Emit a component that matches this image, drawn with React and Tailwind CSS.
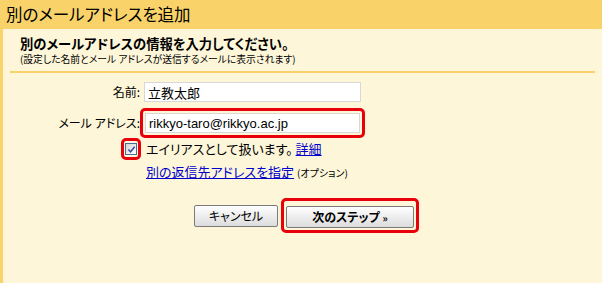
import React from "react";

const jp = "font-['Noto_Sans_CJK_JP','Noto_Sans',sans-serif] [font-feature-settings:'palt']";

export default function App() {
  return (
    <div className={`w-[602px] h-[283px] overflow-hidden bg-[#fdf6d9] border-l-[3px] border-[#f9d36a] text-black ${jp}`}>
      {/* header band */}
      <div className="h-[29px] bg-[#f9d36a] pl-[3px] flex items-center">
        <h1 className="text-[16.5px] leading-none font-normal">別のメールアドレスを追加</h1>
      </div>

      {/* intro */}
      <div className="pl-[17px] pt-[8px]">
        <p className="text-[13.3px] font-bold leading-[14px]">別のメールアドレスの情報を入力してください。</p>
        <p className="mt-[2px] text-[9.8px] leading-[12px]">(設定した名前とメール アドレスが送信するメールに表示されます)</p>
      </div>
      <div className="ml-[7px] mt-[6px] w-[585px] h-[2px] bg-[#f9d36a]" />

      {/* form */}
      <div className="mt-[5px] grid grid-cols-[137px_auto] gap-y-[2px] items-center">
        <label className="text-[12px] leading-[16px] text-right">名前:</label>
        <div className="p-[4px] w-[225px]">
          <input
            defaultValue="立教太郎"
            className="block w-full h-[20px] bg-white border border-[#d8d8d8] px-[3px] text-[13px] outline-none"
          />
        </div>

        <label className="text-[12px] leading-[16px] text-right whitespace-nowrap">メール アドレス:</label>
        <div className="w-[225px] border-[3px] border-[#e8000b] rounded-[5px] p-[2px]">
          <input
            defaultValue="rikkyo-taro@rikkyo.ac.jp"
            className="block w-full h-[20px] bg-white border border-[#d8d8d8] px-[3px] text-[13px] font-['Liberation_Sans',sans-serif] outline-none"
          />
        </div>
      </div>

      <div className="grid grid-cols-[137px_auto] items-center">
        <div className="flex justify-end">
          <div className="w-[20px] h-[22px] border-[3px] border-[#e8000b] rounded-[5px] flex items-center justify-center mr-[-1px]">
            <div className="w-[12px] h-[12px] border border-[#4a6a9a] bg-gradient-to-br from-[#d4d4d4] to-white flex items-center justify-center">
              <svg viewBox="0 0 10 10" className="w-[9px] h-[9px]">
                <path d="M1.5 5 L4 7.5 L8.5 2" fill="none" stroke="#3c4fa8" strokeWidth="1.8" />
              </svg>
            </div>
          </div>
        </div>
        <div className="pl-[6px] text-[13px] leading-[16px] whitespace-nowrap">
          エイリアスとして扱います。
          <a href="#" className="ml-[3px] text-[#0000cc] underline">詳細</a>
        </div>

        <div />
        <div className="pl-[6px] pt-[2px] h-[18px] leading-[16px] whitespace-nowrap">
          <a href="#" className="text-[13px] text-[#0000cc] underline">別の返信先アドレスを指定</a>
          <span className="text-[10px] ml-[3px]">(オプション)</span>
        </div>
      </div>

      {/* buttons */}
      <div className="mt-[20px] pl-[191px] flex items-center gap-[3px]">
        <button className="w-[84px] h-[22px] border border-[#7a7a7a] rounded-[2px] bg-gradient-to-b from-white to-[#dcdcdc] text-[12px] leading-none">
          キャンセル
        </button>
        <div className="border-[3px] border-[#e8000b] rounded-[5px] p-[2px]">
          <button className="w-[128px] h-[22px] border border-[#7a7a7a] rounded-[2px] bg-gradient-to-b from-white to-[#dcdcdc] text-[12px] font-bold leading-none">
            次のステップ <span className="text-[10px]">»</span>
          </button>
        </div>
      </div>
    </div>
  );
}
